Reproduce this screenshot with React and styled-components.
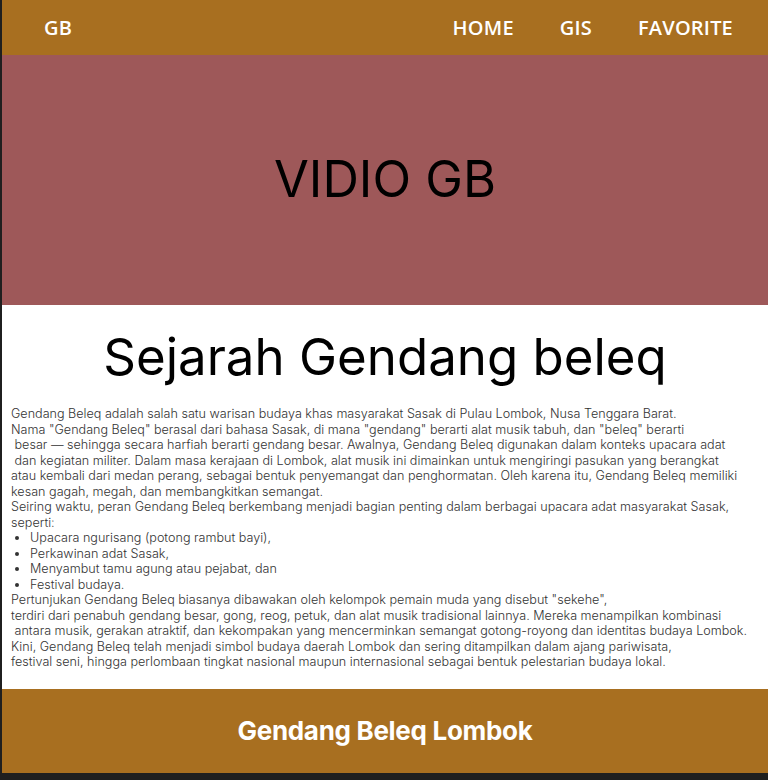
import React from "react";
import styled, { createGlobalStyle } from "styled-components";

const Global = createGlobalStyle`
  html, body { margin: 0; padding: 0; background: #1f1f1f; }
  body { font-family: Inter, "Noto Sans", sans-serif; }
  * { box-sizing: border-box; }
`;

const Page = styled.div`
  margin-left: 2px;
  width: 766px;
  background: #ffffff;
`;

const Nav = styled.nav`
  height: 55px;
  background: #a86f20;
  display: flex;
  align-items: center;
  justify-content: space-between;
  padding: 0 35px 0 42px;
  font-family: "Open Sans", "Noto Sans", sans-serif;
  font-weight: 600;
  font-size: 20px;
  color: #ffffff;
`;

const Brand = styled.div`
  letter-spacing: 0.3px;
`;

const Links = styled.ul`
  list-style: none;
  margin: 0;
  padding: 0;
  display: flex;
  gap: 46px;
`;

const Link = styled.li`
  letter-spacing: 0.2px;
`;

const Video = styled.section`
  height: 250px;
  background: #9e5859;
  display: flex;
  align-items: center;
  justify-content: center;
  font-size: 50.5px;
  color: #000;
  padding-bottom: 4px;
`;

const Article = styled.main`
  padding: 20px 9px 19px 9px;
`;

const Title = styled.h1`
  margin: 0 0 17px;
  text-align: center;
  font-weight: 400;
  font-size: 51px;
  line-height: 64px;
  color: #000;
`;

const Text = styled.p`
  margin: 0;
  white-space: pre;
  font-size: 12.6px;
  font-weight: 300;
  line-height: 15.5px;
  color: #333;
`;

const List = styled.ul`
  margin: 0;
  padding-left: 19px;
  font-size: 12.6px;
  font-weight: 300;
  line-height: 15.5px;
  color: #333;
`;

const Footer = styled.footer`
  height: 84px;
  background: #a86f20;
  display: flex;
  align-items: center;
  justify-content: center;
  font-family: Inter, "Noto Sans", sans-serif;
  font-weight: 700;
  font-size: 26px;
  letter-spacing: -0.3px;
  color: #ffffff;
`;

const para1 = `Gendang Beleq adalah salah satu warisan budaya khas masyarakat Sasak di Pulau Lombok, Nusa Tenggara Barat.
Nama "Gendang Beleq" berasal dari bahasa Sasak, di mana "gendang" berarti alat musik tabuh, dan "beleq" berarti
 besar — sehingga secara harfiah berarti gendang besar. Awalnya, Gendang Beleq digunakan dalam konteks upacara adat
 dan kegiatan militer. Dalam masa kerajaan di Lombok, alat musik ini dimainkan untuk mengiringi pasukan yang berangkat
atau kembali dari medan perang, sebagai bentuk penyemangat dan penghormatan. Oleh karena itu, Gendang Beleq memiliki
kesan gagah, megah, dan membangkitkan semangat.
Seiring waktu, peran Gendang Beleq berkembang menjadi bagian penting dalam berbagai upacara adat masyarakat Sasak,
seperti:`;

const items = [
  "Upacara ngurisang (potong rambut bayi),",
  "Perkawinan adat Sasak,",
  "Menyambut tamu agung atau pejabat, dan",
  "Festival budaya.",
];

const para2 = `Pertunjukan Gendang Beleq biasanya dibawakan oleh kelompok pemain muda yang disebut "sekehe",
terdiri dari penabuh gendang besar, gong, reog, petuk, dan alat musik tradisional lainnya. Mereka menampilkan kombinasi
 antara musik, gerakan atraktif, dan kekompakan yang mencerminkan semangat gotong-royong dan identitas budaya Lombok.
Kini, Gendang Beleq telah menjadi simbol budaya daerah Lombok dan sering ditampilkan dalam ajang pariwisata,
festival seni, hingga perlombaan tingkat nasional maupun internasional sebagai bentuk pelestarian budaya lokal.`;

export default function App() {
  return (
    <>
      <Global />
      <Page>
        <Nav>
          <Brand>GB</Brand>
          <Links>
            <Link>HOME</Link>
            <Link>GIS</Link>
            <Link>FAVORITE</Link>
          </Links>
        </Nav>
        <Video>VIDIO GB</Video>
        <Article>
          <Title>Sejarah Gendang beleq</Title>
          <Text>{para1}</Text>
          <List>
            {items.map((t) => (
              <li key={t}>{t}</li>
            ))}
          </List>
          <Text>{para2}</Text>
        </Article>
        <Footer>Gendang Beleq Lombok</Footer>
      </Page>
    </>
  );
}
